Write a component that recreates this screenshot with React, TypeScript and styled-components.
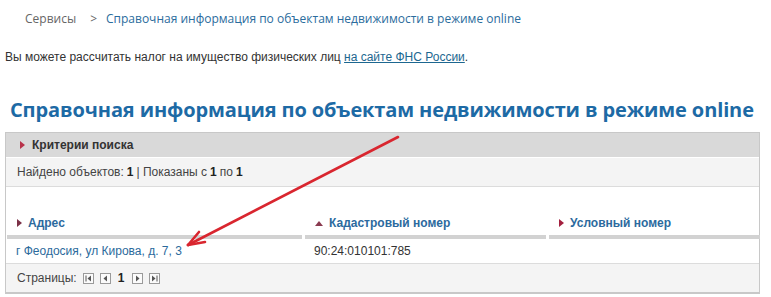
import React from 'react';
import styled, { createGlobalStyle } from 'styled-components';

const GlobalStyle = createGlobalStyle`
  html, body {
    margin: 0;
    padding: 0;
    background: #fff;
  }
  body {
    font-family: 'Liberation Sans', Arial, sans-serif;
    font-size: 12px;
    color: #333;
  }
`;

const Page = styled.div`
  position: relative;
  width: 771px;
  height: 297px;
  overflow: hidden;
`;

const Breadcrumbs = styled.div`
  display: flex;
  align-items: center;
  height: 36px;
  padding-left: 25px;
  font-family: 'Open Sans', 'Liberation Sans', sans-serif;
  font-size: 12px;
  color: #666;
  white-space: nowrap;
`;

const Crumb = styled.span`
  color: #666;
`;

const Separator = styled.span`
  margin: 0 9px 0 14px;
  color: #666;
`;

const CrumbLink = styled.a`
  color: #2b6c9d;
  text-decoration: none;
`;

const Notice = styled.p`
  margin: 13px 0 0 5px;
  line-height: 16px;
  color: #333;
`;

const NoticeLink = styled.a`
  color: #1d6790;
  text-decoration: underline;
`;

const Heading = styled.h1`
  margin: 30px 0 0 10px;
  font-family: 'Open Sans', 'Liberation Sans', sans-serif;
  font-size: 20px;
  font-weight: 700;
  line-height: 30px;
  letter-spacing: -0.12px;
  color: #1d6aa5;
  white-space: nowrap;
`;

const Panel = styled.div`
  margin: 7px 0 0 5px;
  width: 753px;
  border: 1px solid #c8c8c8;
  border-bottom-width: 2px;
`;

const CriteriaBar = styled.div`
  display: flex;
  align-items: center;
  gap: 7px;
  height: 24px;
  padding-left: 14px;
  background: #d9d9d9;
  border-bottom: 1px solid #fff;
  font-weight: 700;
  color: #333;
`;

const Arrow = styled.span<{ $dir: 'right' | 'up'; $color: string }>`
  display: inline-block;
  width: 0;
  height: 0;
  ${p =>
    p.$dir === 'right'
      ? `border-top: 4px solid transparent;
         border-bottom: 4px solid transparent;
         border-left: 5px solid ${p.$color};`
      : `border-left: 4px solid transparent;
         border-right: 4px solid transparent;
         border-bottom: 5px solid ${p.$color};`}
`;

const InfoRow = styled.div`
  display: flex;
  align-items: center;
  height: 28px;
  padding-left: 11px;
  background: #f4f4f4;
  border-bottom: 1px solid #dcdcdc;
  color: #444;

  b {
    color: #222;
    margin: 0 3px 0 3px;
  }
`;

const Grid = styled.div`
  display: grid;
  grid-template-columns: 295px 241px 211px;
  column-gap: 3px;
  padding: 0 1px;
  margin-top: 24px;
`;

const HeadCell = styled.div`
  display: flex;
  align-items: center;
  gap: 6px;
  height: 24px;
  padding-left: 10px;
  border-bottom: 4px solid #d2d2d2;
  font-weight: 700;
  color: #2c6a9e;
`;

const Cell = styled.div`
  display: flex;
  align-items: center;
  height: 24px;
  padding-left: 9px;
  color: #333;
`;

const CellLink = styled.a`
  color: #2b6a9c;
  text-decoration: none;
`;

const Divider = styled.div`
  height: 1px;
  background: #dcdcdc;
`;

const Pager = styled.div`
  display: flex;
  align-items: center;
  height: 28px;
  padding-left: 11px;
  background: #f4f4f4;
  color: #444;
`;

const PagerLabel = styled.span`
  margin-right: 6px;
`;

const PageButton = styled.span`
  display: inline-flex;
  align-items: center;
  justify-content: center;
  width: 9px;
  height: 9px;
  margin-right: 6px;
  border: 1px solid #9a9a9a;
  background: #fbfbfb;
`;

const PageNumber = styled.b`
  margin: 0 8px 0 1px;
  color: #222;
`;

const Overlay = styled.svg`
  position: absolute;
  left: 0;
  top: 0;
  pointer-events: none;
`;

const Glyph: React.FC<{ kind: 'first' | 'prev' | 'next' | 'last' }> = ({ kind }) => (
  <svg width="7" height="7" viewBox="0 0 7 7">
    {kind === 'first' && (
      <>
        <rect x="0.5" y="0.5" width="1" height="6" fill="#555" />
        <polygon points="6,0.5 6,6.5 2.5,3.5" fill="#555" />
      </>
    )}
    {kind === 'prev' && <polygon points="5,0.5 5,6.5 1.5,3.5" fill="#555" />}
    {kind === 'next' && <polygon points="2,0.5 2,6.5 5.5,3.5" fill="#555" />}
    {kind === 'last' && (
      <>
        <polygon points="1,0.5 1,6.5 4.5,3.5" fill="#555" />
        <rect x="5.5" y="0.5" width="1" height="6" fill="#555" />
      </>
    )}
  </svg>
);

export default function App() {
  return (
    <Page>
      <GlobalStyle />
      <Breadcrumbs>
        <Crumb>Сервисы</Crumb>
        <Separator>&gt;</Separator>
        <CrumbLink href="#">Справочная информация по объектам недвижимости в режиме online</CrumbLink>
      </Breadcrumbs>

      <Notice>
        Вы можете рассчитать налог на имущество физических лиц <NoticeLink href="#">на сайте ФНС России</NoticeLink>.
      </Notice>

      <Heading>Справочная информация по объектам недвижимости в режиме online</Heading>

      <Panel>
        <CriteriaBar>
          <Arrow $dir="right" $color="#b8324a" />
          Критерии поиска
        </CriteriaBar>
        <InfoRow>
          Найдено объектов:<b>1</b>| Показаны с<b>1</b>по<b>1</b>
        </InfoRow>

        <Grid>
          <HeadCell>
            <Arrow $dir="right" $color="#7c3147" />
            Адрес
          </HeadCell>
          <HeadCell>
            <Arrow $dir="up" $color="#8a3a50" />
            Кадастровый номер
          </HeadCell>
          <HeadCell>
            <Arrow $dir="right" $color="#a3203f" />
            Условный номер
          </HeadCell>
          <Cell>
            <CellLink href="#">г Феодосия, ул Кирова, д. 7, 3</CellLink>
          </Cell>
          <Cell>90:24:010101:785</Cell>
          <Cell />
        </Grid>
        <Divider />

        <Pager>
          <PagerLabel>Страницы:</PagerLabel>
          <PageButton><Glyph kind="first" /></PageButton>
          <PageButton><Glyph kind="prev" /></PageButton>
          <PageNumber>1</PageNumber>
          <PageButton><Glyph kind="next" /></PageButton>
          <PageButton><Glyph kind="last" /></PageButton>
        </Pager>
      </Panel>

      <Overlay width="771" height="297" viewBox="0 0 771 297">
        <g stroke="#d9262f" strokeWidth="2.6" strokeLinecap="round" fill="none">
          <line x1="398" y1="137" x2="188" y2="245" />
          <line x1="188" y1="245" x2="199" y2="232" />
          <line x1="188" y1="245" x2="205" y2="242" />
        </g>
      </Overlay>
    </Page>
  );
}
